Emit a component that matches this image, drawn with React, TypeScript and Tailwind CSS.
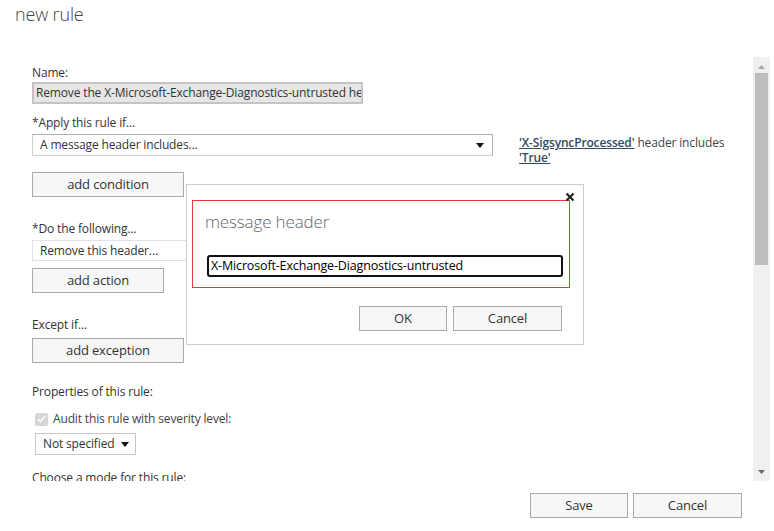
import React from "react";

const font = { fontFamily: '"Open Sans", "Noto Sans", Arial, sans-serif' };

function Caret({ className = "" }: { className?: string }) {
  return (
    <svg width="8" height="5" viewBox="0 0 8 5" className={className}>
      <path d="M0 0h8L4 5z" fill="#111" />
    </svg>
  );
}

function Btn({ label, w, h = "h-[25px]" }: { label: string; w: string; h?: string }) {
  return (
    <button
      className={`block ${w} ${h} shrink-0 border border-[#a4abad] bg-[#f7f7f7] text-[13px] leading-none text-[#333]`}
    >
      {label}
    </button>
  );
}

function Label({ text, mt }: { text: string; mt: string }) {
  return <div className={`${mt} text-[12px] leading-[16px] text-[#333]`}>{text}</div>;
}

export default function App() {
  return (
    <div className="relative w-[774px] h-[531px] bg-white overflow-hidden tracking-[-0.15px]" style={font}>
      {/* Title */}
      <div className="h-[57px] pl-[15px] pt-[2px] text-[18px] leading-[24px] font-light text-[#444]">
        new rule
      </div>

      {/* Scroll region */}
      <div className="flex h-[424px]">
        <div className="flex-1 overflow-hidden pl-[32px] pt-[8px]">
          <Label text="Name:" mt="mt-0" />
          <div className="mt-[1px] h-[22px] w-[331px] border-2 border-[#c4c4c4] bg-[#e6e6e6] pl-[2px] text-[12px] leading-[18px] text-[#333] overflow-hidden whitespace-nowrap">
            Remove the X-Microsoft-Exchange-Diagnostics-untrusted header
          </div>

          <Label text="*Apply this rule if..." mt="mt-[11px]" />
          <div className="mt-[3px] flex h-[22px] items-start">
            <div className="flex h-[22px] w-[461px] items-center justify-between border border-[#cfcfcf] border-t-[#b0b0b0] border-r-[#b0b0b0] pl-[7px] pr-[8px] text-[12px] text-[#333]">
              <span>A message header includes...</span>
              <Caret />
            </div>
            <div className="ml-[26px] mt-[1px] text-[12px] leading-[15px] text-[#444]">
              <div className="whitespace-nowrap">
                <span className="font-semibold text-[#34495e] underline">'X-SigsyncProcessed'</span> header includes
              </div>
              <div>
                <span className="font-semibold text-[#34495e] underline">'True'</span>
              </div>
            </div>
          </div>

          <div className="mt-[16px]">
            <Btn label="add condition" w="w-[152px]" h="h-[25px]" />
          </div>

          <Label text="*Do the following..." mt="mt-[24px]" />
          <div className="mt-[3px] flex h-[21px] w-[240px] items-center border border-[#dde3e8] pl-[7px] text-[12px] text-[#333]">
            Remove this header...
          </div>
          <div className="mt-[7px]">
            <Btn label="add action" w="w-[132px]" />
          </div>

          <Label text="Except if..." mt="mt-[24px]" />
          <div className="mt-[5px]">
            <Btn label="add exception" w="w-[152px]" />
          </div>

          <Label text="Properties of this rule:" mt="mt-[21px]" />
          <div className="mt-[11px] flex items-center pl-[3px] h-[16px]">
            <div className="flex h-[13px] w-[13px] items-center justify-center rounded-[2px] bg-[#d6d6d6]">
              <svg width="9" height="8" viewBox="0 0 9 8">
                <path d="M1 4.2l2.3 2.3L8 1.2" stroke="#fff" strokeWidth="1.6" fill="none" />
              </svg>
            </div>
            <span className="ml-[5px] text-[12px] text-[#444]">Audit this rule with severity level:</span>
          </div>
          <div className="ml-[3px] mt-[6px] flex h-[22px] w-[101px] items-center justify-between border border-[#c8c8c8] pl-[7px] pr-[6px] text-[12px] text-[#333]">
            <span>Not specified</span>
            <Caret />
          </div>

          <Label text="Choose a mode for this rule:" mt="mt-[15px]" />
        </div>

        {/* Scrollbar */}
        <div className="mr-[4px] flex w-[17px] flex-col items-center bg-[#f0f0f0]">
          <svg width="7" height="4" viewBox="0 0 7 4" className="mt-[8px]">
            <path d="M0 4h7L3.5 0z" fill="#a3a9a9" />
          </svg>
          <div className="mt-[4px] h-[192px] w-[13px] bg-[#bdbdbd]" />
          <div className="flex-1" />
          <svg width="7" height="4" viewBox="0 0 7 4" className="mb-[7px]">
            <path d="M0 0h7L3.5 4z" fill="#6b6b6b" />
          </svg>
        </div>
      </div>

      {/* Footer */}
      <div className="mt-[12px] flex justify-end gap-[5px] pr-[32px]">
        <Btn label="Save" w="w-[98px]" />
        <Btn label="Cancel" w="w-[109px]" />
      </div>

      {/* Dialog */}
      <div className="absolute left-[186px] top-[184px] h-[161px] w-[398px] border border-[#c9ced1] bg-white">
        <div className="absolute right-[8px] top-[7px]">
          <svg width="10" height="10" viewBox="0 0 10 10">
            <path d="M1.5 1.5l7 7M8.5 1.5l-7 7" stroke="#222" strokeWidth="2.2" />
          </svg>
        </div>
        <div className="ml-[5px] mt-[15px] h-[88px] w-[378px] border border-[#e33b3b] pl-[12px] pt-[10px]">
          <div className="text-[17px] leading-[22px] font-light text-[#666]">message header</div>
          <div className="mt-[22px] ml-[2px] h-[22px] w-[356px] rounded-[3px] border-2 border-[#111] pl-[2px] text-[12.5px] leading-[18px] text-black">
            X-Microsoft-Exchange-Diagnostics-untrusted
          </div>
        </div>
        <div className="mt-[18px] flex justify-end gap-[6px] pr-[21px]">
          <Btn label="OK" w="w-[88px]" />
          <Btn label="Cancel" w="w-[109px]" />
        </div>
      </div>
    </div>
  );
}
